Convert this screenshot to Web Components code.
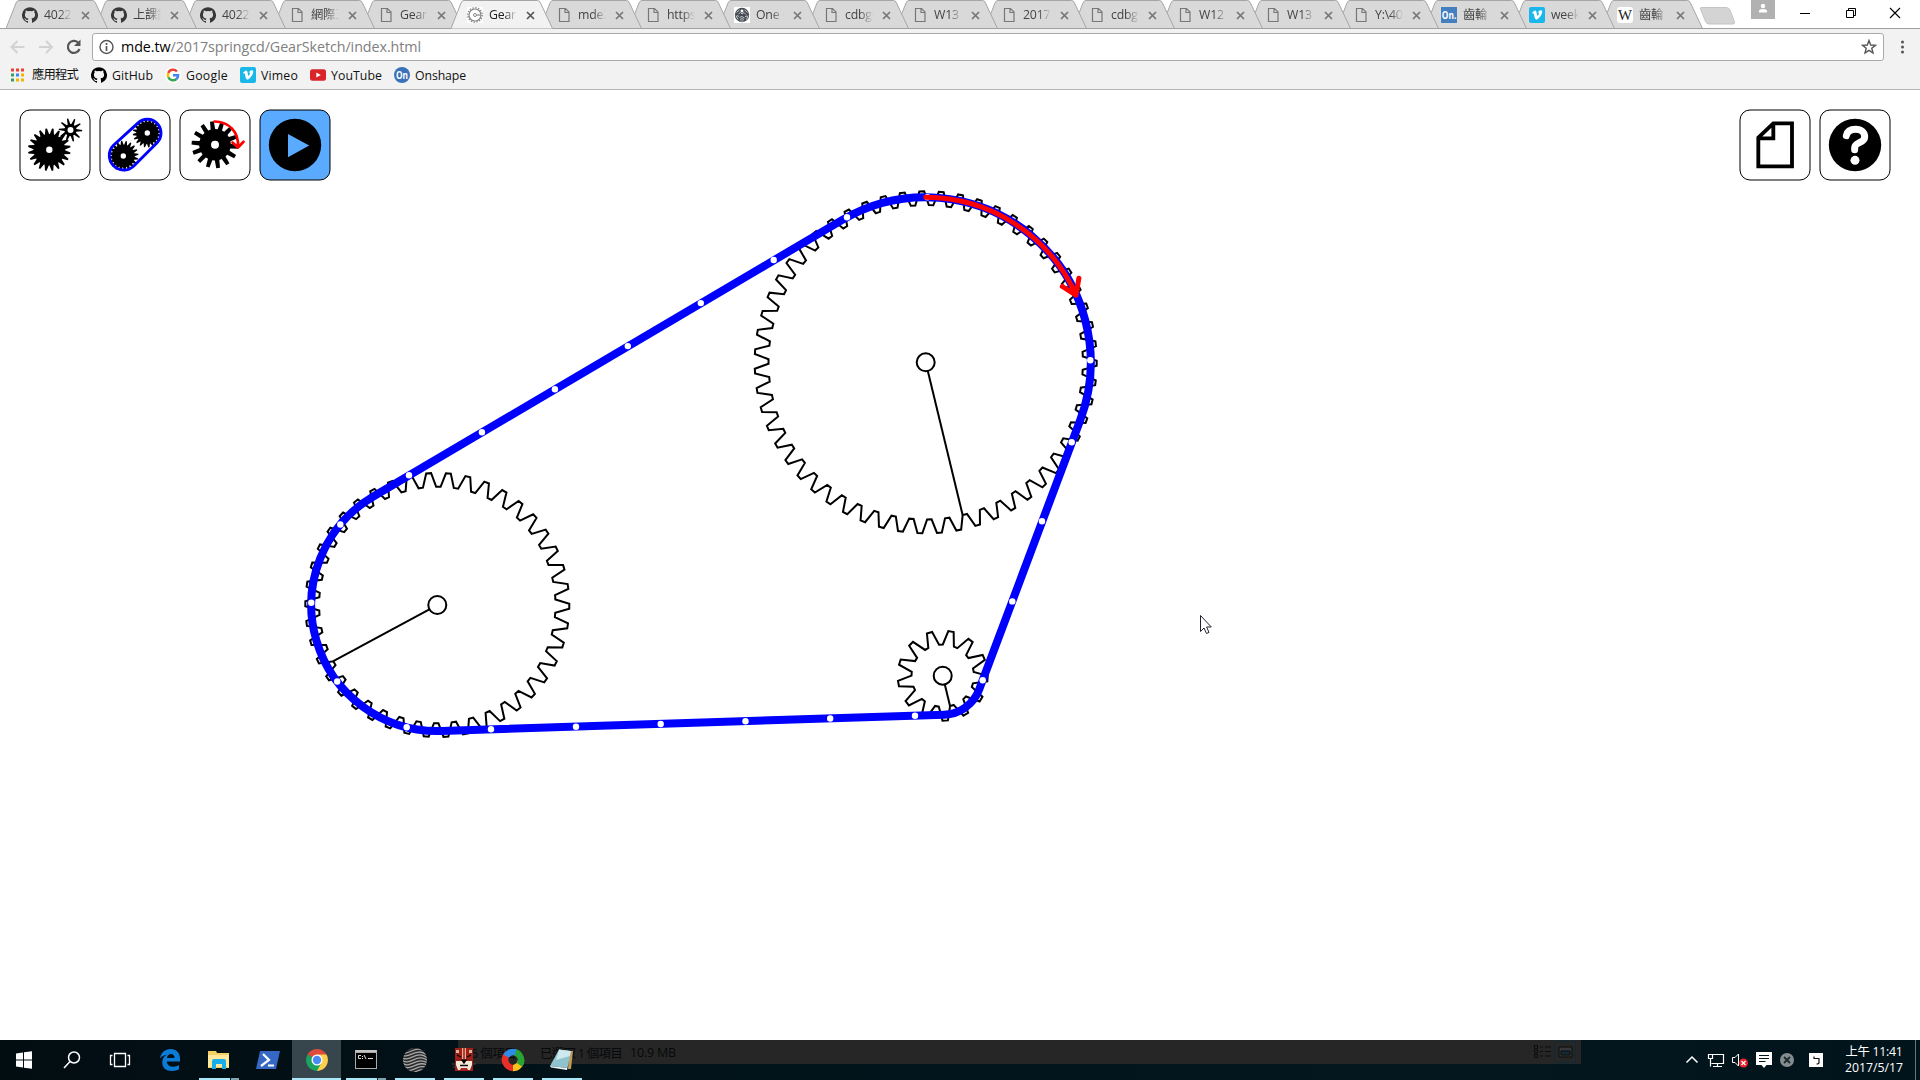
<!DOCTYPE html>
<html lang="zh-Hant">
<head>
<meta charset="utf-8">
<title>GearSketch</title>
<style>
html,body{margin:0;height:100%;overflow:hidden;background:#fff}
body{font-family:"Open Sans","Noto Sans CJK TC",sans-serif}
</style>
</head>
<body>
<desktop-screen></desktop-screen>
<script>
const make = (host, css, html) => {
  const t = document.createElement('template');
  t.innerHTML = `<style>*{box-sizing:border-box}${css}</style>${html}`;
  host.attachShadow({mode:'open'}).appendChild(t.content.cloneNode(true));
};

/* ---------- gear geometry ---------- */
function gearPath(cx, cy, n, outer, inner, deg = 0, top = .25, flank = .25) {
  const P = 2 * Math.PI / n, t0 = deg * Math.PI / 180, pts = [];
  const root = 1 - top - 2 * flank;
  const add = (a, r) => pts.push((cx + r * Math.cos(a)).toFixed(2) + ' ' + (cy + r * Math.sin(a)).toFixed(2));
  for (let i = 0; i < n; i++) {
    const a = t0 + i * P;
    add(a - root * P, inner); add(a, inner);
    add(a + flank * P, outer); add(a + (flank + top) * P, outer);
  }
  return 'M' + pts.join('L') + 'Z';
}
function beltPath(c) {
  let d = '';
  const seg = c.map((a, i) => {
    const b = c[(i + 1) % c.length], dx = b.x - a.x, dy = b.y - a.y;
    const n = Math.atan2(dy, dx) - Math.acos((a.r - b.r) / Math.hypot(dx, dy));
    return [a.x + a.r * Math.cos(n), a.y + a.r * Math.sin(n), b.x + b.r * Math.cos(n), b.y + b.r * Math.sin(n)];
  });
  seg.forEach((s, i) => {
    const nx = seg[(i + 1) % seg.length], r = c[(i + 1) % c.length].r;
    d += (i ? 'L' : 'M') + s[0] + ' ' + s[1] + 'L' + s[2] + ' ' + s[3] + `A${r} ${r} 0 0 1 ${nx[0]} ${nx[1]}`;
  });
  return d + 'Z';
}

/* ---------- icons ---------- */
const OCTO = '<path fill="#000" d="M8 .2A8 8 0 0 0 5.500 15.800c.4.1.5-.2.5-.4v-1.500c-2.200.5-2.700-1-2.700-1-.4-.9-.9-1.200-.9-1.200-.7-.5.1-.5.1-.5.8.1 1.200.8 1.200.8.7 1.300 1.900.9 2.300.7.1-.5.3-.9.5-1.100-1.800-.2-3.600-.9-3.600-4 0-.9.3-1.600.8-2.100-.1-.2-.4-1 .1-2.100 0 0 .7-.2 2.200.8a7.500 7.500 0 0 1 4 0c1.500-1 2.200-.8 2.200-.8.4 1.100.2 1.900.1 2.100.5.6.8 1.300.8 2.100 0 3.100-1.900 3.700-3.700 3.900.3.3.6.8.6 1.500v2.400c0 .2.1.5.5.4A8 8 0 0 0 8 .2z"/>';
const FAV = {
  github: `<g opacity=".75">${OCTO}</g>`,
  githubDark: OCTO,
  page: '<path d="M3.500 1.500h6l3.500 3.500v9.500h-9.500zM9 1.500v4h4" fill="none" stroke="#777" stroke-width="1.200"/>',
  gear: `<rect width="16" height="16" fill="#fff"/><circle cx="8" cy="8" r="6" fill="none" stroke="#888" stroke-width="1.200"/><circle cx="8" cy="8" r="7.200" fill="none" stroke="#888" stroke-width="1.400" stroke-dasharray="1.400 1.428"/><circle cx="8" cy="8" r="1.500" fill="none" stroke="#888"/><path d="M9.500 8h4.500" stroke="#888" stroke-width="1.200"/>`,
  ball: `<rect width="16" height="16" fill="#fff"/><circle cx="8" cy="8" r="7.200" fill="#454b50"/><path d="M2.500 5.500l3-2.500M10.500 3l3 2.500M4 12.500l-2-4M12.500 12.500l1.500-4M6.500 14h3M4.500 7l2-1.500 1.500 1.500 2-1.500 2 2M5.500 10.500l2.500-1 2.500 1.500M3 8.500l2 1M11 9.500l2-.5M6 12.500l2-1 2 1" fill="none" stroke="#cfd6da" stroke-width=".9"/><circle cx="8" cy="4" r="1.400" fill="#fff"/>`,
  on: '<rect width="16" height="16" fill="#4480c0"/><text x=".8" y="12.200" font-family="Open Sans" font-weight="700" font-size="10.500" fill="#fff" textLength="14.500" lengthAdjust="spacingAndGlyphs">On.</text>',
  onRound: '<circle cx="8" cy="8" r="8" fill="#3a72b8"/><text x="2" y="11.700" font-family="Open Sans" font-weight="700" font-size="10" fill="#fff" textLength="12" lengthAdjust="spacingAndGlyphs">On</text>',
  vimeo: '<rect width="16" height="16" rx="2" fill="#1ab7ea"/><path d="M3 5.800 5.400 3.800c1.300-.6 1.900.3 2.200 2 .3 1.500.5 3 .9 3s1.200-1.300 1.500-2c.3-.9-.2-1.100-1-.8.4-1.800 1.500-2.800 2.800-2.700 1.300.1 1.700 1.100 1.200 2.800-.6 2.300-3.200 5.800-5 6.500-1.400.4-2.200-1.200-2.600-3-.3-1.400-.6-3.200-1-3.400L3.600 6.600z" fill="#fff"/>',
  wiki: '<rect width="16" height="16" rx="3" fill="#fff"/><text x="1" y="13" font-family="Liberation Serif" font-size="14" fill="#222" textLength="14" lengthAdjust="spacingAndGlyphs">W</text>',
  google: '<circle cx="8" cy="8" r="8" fill="#fff"/><g fill="none" stroke-width="2.500"><path d="M12 4.500A5.200 5.200 0 0 0 3.300 6" stroke="#ea4335"/><path d="M3.300 6a5.200 5.200 0 0 0 0 4.300" stroke="#fbbc05"/><path d="M3.300 10.200A5.200 5.200 0 0 0 11.500 12" stroke="#34a853"/><path d="M8 8.200h5.100A5 5 0 0 1 11.500 12" stroke="#4285f4"/></g>',
  youtube: '<rect y="2.200" width="16" height="11.600" rx="2.500" fill="#d9252a"/><path d="M6.300 5.400v5.200l4.500-2.600z" fill="#fff"/>',
  apps: [0,1,2].map(r=>[0,1,2].map(c=>`<rect x="${1+c*5}" y="${1.500+r*5}" width="3" height="3" fill="${[['#ea4335','#ea4335','#ea4335'],['#34a05a','#4285f4','#f4b400'],['#34a05a','#f4b400','#f4b400']][r][c]}"/>`).join('')).join('')
};

class FavIcon extends HTMLElement {
  connectedCallback() { make(this, ':host{display:block;flex:none;width:16px;height:16px}svg{display:block}', `<svg width="16" height="16">${FAV[this.getAttribute('name')]}</svg>`); }
}
customElements.define('fav-icon', FavIcon);

/* one line of text whose tracking is adjusted to a given width */
class FitText extends HTMLElement {
  connectedCallback() {
    make(this, ':host{display:block;flex:none;white-space:pre;line-height:normal}span{display:inline-block}', '<span><slot></slot></span>');
    const w = +this.getAttribute('w'); if (!w) return;
    const s = this.shadowRoot.querySelector('span'), n = [...this.textContent].length;
    this.style.width = w + 'px';
    s.style.letterSpacing = (w - s.getBoundingClientRect().width) / n + 'px';
  }
}
customElements.define('fit-text', FitText);

/* ---------- tab strip ---------- */
class BrowserTab extends HTMLElement {
  connectedCallback() {
    const on = this.hasAttribute('active'), bg = on ? '#f2f2f2' : '#d9d9d9';
    make(this, `:host{display:flex;position:relative;flex:none;height:29px;padding:0 0 0 16px;align-items:center}
      svg.bg{position:absolute;left:0;top:0}
      fav-icon,.t,.x{position:relative}
      fav-icon{margin-top:1px}
      .t{margin-left:6px;width:28px;overflow:hidden;white-space:nowrap;font-size:12.300px;line-height:20px;letter-spacing:-.2px;color:${on?'#222':'#444'};-webkit-mask-image:linear-gradient(90deg,#000 55%,transparent)}
      .x{margin-left:9px;margin-top:1px}`,
      `<svg class="bg" width="104" height="29"><path d="M0 28.500 10 3Q11 .5 13 .5H86.500Q88.500 .5 89.500 3L101.500 28.500" fill="${bg}" stroke="#a6a6a6"/>${on?'':'<path d="M0 28.500h102" stroke="#a0a0a0"/>'}</svg>
      <fav-icon name="${this.getAttribute('icon')}"></fav-icon><div class="t"><slot></slot></div>
      <svg class="x" width="9" height="9"><path d="M1 1l7 7M8 1l-7 7" stroke="${on?'#555':'#777'}" stroke-width="1.700"/></svg>`);
  }
}
customElements.define('browser-tab', BrowserTab);

const TABS = [['github','4022'],['github','上課錄'],['github','4022'],['page','網際工'],['page','GearS'],['gear','GearS'],['page','mde2'],['page','https:'],['ball','One C'],['page','cdbg0'],['page','W13'],['page','2017'],['page','cdbg0'],['page','W12'],['page','W13'],['page','Y:\\40'],['on','齒輪'],['vimeo','week'],['wiki','齒輪']];
class TabStrip extends HTMLElement {
  connectedCallback() {
    make(this, `:host{display:flex;height:29px;background:linear-gradient(#fff 28px,#a0a0a0 28px);padding-left:6px;align-items:flex-start}
      .new{margin:7px 0 0 11px;flex:none}.gap{flex:1}.user{width:24px;height:19px;background:#b1b1b1;margin-right:7px}
      .w{width:46px;height:27px;display:block;flex:none}`,
      TABS.map((t,i)=>`<browser-tab icon="${t[0]}" ${i==5?'active':''} style="width:${i<11?89:88}px;z-index:${i==5?50:30-i}">${t[1]}</browser-tab>`).join('') +
      `<svg class="new" width="36" height="18"><path d="M1 .5H26Q29 .5 30 3L34.500 15Q35 17 33 17H9Q6.500 17 5.500 14.500L.5 2Q.3 .5 1 .5z" fill="#d4d4d4" stroke="#c4c4c4"/></svg>
      <div class="gap"></div>
      <svg class="user" viewBox="0 0 24 19"><circle cx="12" cy="6" r="2.200" fill="#fff"/><path d="M8 12.500V11q0-2 4-2t4 2v1.500z" fill="#fff"/></svg>
      <svg class="w"><path d="M18 13.500h10" stroke="#000"/></svg>
      <svg class="w"><path d="M18.500 10.500h7v7h-7zM20.500 10.500v-2h7v7h-2" fill="none" stroke="#000"/></svg>
      <svg class="w"><path d="M16 8l10 10M26 8l-10 10" stroke="#000" stroke-width="1.100"/></svg>`);
  }
}
customElements.define('tab-strip', TabStrip);

/* ---------- toolbar ---------- */
class AddressBar extends HTMLElement {
  connectedCallback() {
    make(this, `:host{display:flex;height:33px;background:#f2f2f2;align-items:flex-start;padding:4px 0 0 0}
      .nav{width:92px;height:28px;flex:none}
      .box{width:1792px;height:28px;border:1px solid #a9a9a9;border-radius:3px;background:#fff;display:flex;align-items:center;padding:0 6px 0 5px}
      .info{width:18px;height:18px;flex:none}fit-text{margin-left:5px;font-size:14.300px;margin-top:-1px;color:#808080}b{font-weight:400;color:#000}
      .star{margin-left:auto}.menu{width:36px;height:28px}`,
      `<svg class="nav" fill="none"><path d="M24.500 14H12M17.500 8l-6 6 6 6M39 14h12.500M46 8l6 6-6 6" stroke="#d2d2d2" stroke-width="2"/><path d="M78 9.500A6 6 0 1 0 79.500 16" stroke="#555" stroke-width="2.200"/><path d="M80.500 6.500v6.500h-6.500z" fill="#555"/></svg>
      <div class="box"><svg class="info"><circle cx="8.500" cy="9" r="6.500" fill="none" stroke="#555" stroke-width="1.400"/><path d="M8.500 8v5M8.500 5v2" stroke="#555" stroke-width="1.700"/></svg>
      <fit-text w="300"><b>mde.tw</b>/2017springcd/GearSketch/index.html</fit-text>
      <svg class="star" width="16" height="16"><path d="M8 1.500l1.700 4.500 4.800.3-3.700 3 1.200 4.700-4-2.600-4 2.600 1.200-4.700-3.700-3 4.800-.3z" fill="none" stroke="#555" stroke-width="1.400"/></svg></div>
      <svg class="menu"><g fill="#555"><circle cx="18.500" cy="9" r="1.500"/><circle cx="18.500" cy="14" r="1.500"/><circle cx="18.500" cy="19" r="1.500"/></g></svg>`);
  }
}
customElements.define('address-bar', AddressBar);

class BookmarkBar extends HTMLElement {
  connectedCallback() {
    const B = [['apps',10,6,46,'應用程式'],['githubDark',13,5,41,'GitHub'],['google',12,5,42,'Google'],['vimeo',12,5,37,'Vimeo'],['youtube',12,5,51,'YouTube'],['onRound',12,5,51,'Onshape']];
    make(this, `:host{display:flex;height:28px;background:#f2f2f2;border-bottom:1px solid #b4b4b4;align-items:center;font-size:12.300px;color:#111}fav-icon{margin-top:-1px}fit-text{height:18px;line-height:18px!important}fit-text:nth-of-type(1){margin-top:-1px}`,
      B.map(b=>`<fav-icon name="${b[0]}" style="margin-left:${b[1]}px"></fav-icon><fit-text w="${b[3]}" style="margin-left:${b[2]}px">${b[4]}</fit-text>`).join(''));
  }
}
customElements.define('bookmark-bar', BookmarkBar);

/* ---------- GearSketch buttons; each icon is drawn in sketch coordinates ---------- */
const ICON = {
  gear: () => `<path fill-rule="evenodd" d="${gearPath(49.300,149.700,20,21.300,15.800,2,.24,.3)}M52.500 149.700a3.200 3.200 0 1 0-6.400 0 3.200 3.200 0 1 0 6.400 0"/><path fill-rule="evenodd" d="${gearPath(70.500,130,10,11.700,6,-10,.18,.28)}M73.500 130a3 3 0 1 0-6 0 3 3 0 1 0 6 0"/>`,
  chain: () => `<path d="${gearPath(123.300,156,20,15.200,11.400,4,.24,.3)}"/><path d="${gearPath(147.300,133,20,14.500,11,4,.24,.3)}"/><circle cx="123.300" cy="156" r="2.700" fill="#fff"/><circle cx="147.300" cy="133" r="2.700" fill="#fff"/><path d="${beltPath([{x:123.300,y:156,r:14.500},{x:147.300,y:133,r:13.700}])}" fill="none" stroke="#00f" stroke-width="2.900"/>`,
  momentum: () => `<path d="${gearPath(215,144.700,14,23.500,15.800,-3,.36,.14)}"/><circle cx="215" cy="144.700" r="4" fill="#fff"/><path d="M214.500 121.500C229 121.500 239 132 238 147M232.500 142.500 238 147.500 243.500 141.800" fill="none" stroke="red" stroke-width="2.700" stroke-linejoin="round" stroke-linecap="round"/>`,
  play: () => `<circle cx="295" cy="145" r="26.200"/><path d="M288 134v23.300L309.200 145.400z" fill="#5aaaff"/>`,
  doc: () => `<path transform="translate(1720 95) scale(.3333)" d="M115 128 160 85H216V214H115zM160 85v45H115" fill="none" stroke="#000" stroke-width="11.500"/>`,
  help: () => `<circle cx="1855" cy="145" r="26.200"/><g transform="translate(1720 95) scale(.3333)"><path d="M379 122C382 108 394 103 407 103C424 103 434 112 434 126C434 145 404 141 404 158V164" fill="none" stroke="#fff" stroke-width="21" stroke-linecap="round"/><circle cx="405" cy="196" r="13.500" fill="#fff"/></g>`
};
class SketchButton extends HTMLElement {
  connectedCallback() {
    const x = +this.getAttribute('x'), k = this.getAttribute('icon');
    make(this, ':host{display:block;width:72px;height:72px;flex:none}svg{display:block}',
      `<svg width="72" height="72" viewBox="${x-1} 109 72 72"><rect x="${x}" y="110" width="70" height="70" rx="10" fill="${k=='play'?'#5aaaff':'#fff'}" stroke="#000"/>${ICON[k]()}</svg>`);
  }
}
customElements.define('sketch-button', SketchButton);

/* ---------- gear canvas ---------- */
class GearCanvas extends HTMLElement {
  connectedCallback() {
    const A={x:925.700,y:362.300,r:165,n:55,t:76.400}, B={x:437.300,y:605,r:126,n:42,t:151.600}, C={x:942.700,y:675.700,r:39,n:13,t:76.400};
    const gear = g => { const a=g.t*Math.PI/180, i=g.r-7.800;
      return `<path d="${gearPath(g.x,g.y,g.n,g.r+6,i,g.t)}"/><circle cx="${g.x}" cy="${g.y}" r="9"/><path d="M${g.x+9*Math.cos(a)} ${g.y+9*Math.sin(a)}L${g.x+i*Math.cos(a)} ${g.y+i*Math.sin(a)}"/>`; };
    const dots = [[773.700,260],[847,217.300],[1090.300,360.300],[1071.700,442.300],[1042,521.300],[1012.300,601.400],[982.700,680.300],[915,715.700],[409,475.300],[340.300,524.500],[311.300,602.700],[337.200,681.500],[406.700,727.300],[491,729.300],[576,726.700],[660.700,724],[745.500,721.200],[830.200,718.500],[481.900,432.200],[554.900,389.200],[627.800,346.100],[700.800,303.100],[927.500,197.300]];
    make(this, ':host{display:block}svg{display:block}',
      `<svg width="1920" height="950" viewBox="0 90 1920 950"><g fill="none" stroke="#000" stroke-width="2">${gear(A)}${gear(B)}${gear(C)}</g>
      <path d="${beltPath([A,C,B])}" fill="none" stroke="#00f" stroke-width="8"/>
      <g fill="#fff">${dots.map(d=>`<circle cx="${d[0]}" cy="${d[1]}" r="3.200"/>`).join('')}</g>
      <path d="M925.700 197.300A165 165 0 0 1 1075.800 294.500M1062.300 286.500 1076 295.200 1078.900 278.200" fill="none" stroke="red" stroke-width="5" stroke-linecap="round" stroke-linejoin="round"/>
      <path d="M1200.500 615.500V631.500L1204 628 1206.500 633.500 1209 632.400 1206.600 627H1211.300z" fill="#fff" stroke="#223" stroke-width="1"/></svg>`);
  }
}
customElements.define('gear-canvas', GearCanvas);

class SketchPage extends HTMLElement {
  connectedCallback() {
    make(this, `:host{display:grid;height:950px;background:#fff;overflow:hidden}gear-canvas,.bar{grid-area:1/1}
      .bar{display:flex;gap:8px;padding:19px 29px 0 19px;align-items:flex-start}i{flex:1}`,
      `<gear-canvas></gear-canvas><div class="bar"><sketch-button icon="gear" x="20"></sketch-button><sketch-button icon="chain" x="100"></sketch-button><sketch-button icon="momentum" x="180"></sketch-button><sketch-button icon="play" x="260"></sketch-button><i></i><sketch-button icon="doc" x="1740"></sketch-button><sketch-button icon="help" x="1820"></sketch-button></div>`);
  }
}
customElements.define('sketch-page', SketchPage);

/* ---------- taskbar ---------- */
const swirl = [-15,-12,-9,-6,-3,0,3,6,9,12].map(o=>`<path d="M-1 ${9+o}C5 ${18+o} 16 ${4+o} 25 ${16+o}"/>`).join('');
const APP = {
  start:'<path fill="#fff" d="M4 5.500 11 4.500V11.500H4zM12 4.300 20 3.200V11.500H12zM4 12.500h7v7L4 18.500zM12 12.500h8v8.300L12 19.700z"/>',
  search:'<circle cx="14" cy="9.500" r="5.500" fill="none" stroke="#fff" stroke-width="1.500"/><path d="M10 13.500 4 20" stroke="#fff" stroke-width="1.500"/>',
  view:'<path d="M5.500 5.500h11v13h-11zM3.500 7.500h-2v9h2M18.500 7.500h2v9h-2" fill="none" stroke="#fff" stroke-width="1.300"/>',
  edge:'<path fill="#0b7bd6" d="M2 10.500C3 4.500 7 1 12.500 1 18.500 1 22 5 22 10.500V13.500H8.800C9 17 12 18.700 15 18.700c2.500 0 4.500-.7 6-1.600V21.300C19 22.500 17 23 14 23 8 23 4.200 19.500 4.200 14.500 4.200 11 6 8.300 9 6.800 6 7 3.500 8.500 2 10.500zM9 10h7.500C16.500 7.500 15 6 13 6S9.300 7.500 9 10z"/>',
  files:'<path fill="#f4cf66" d="M1 3h8l1 2h12v15H1z"/><path fill="#ffe89a" d="M1 7h21v12H1z"/><path fill="#19aeea" d="M5 13q0-2 2-2h10q2 0 2 2v8h-4v-5H9v5H5z"/>',
  ps:'<path fill="#3468c4" d="M4 3h20l-4 18H0z"/><path d="M7 6l6 6-8 6M12 17.500h6" fill="none" stroke="#fff" stroke-width="2.200"/>',
  chrome:'<path fill="#dd4b3e" d="M12 12 2.500 6.500A11 11 0 0 1 21.500 6.500z"/><path fill="#fcd04b" d="M12 12V6.500h9.500A11 11 0 0 1 12 23z"/><path fill="#1ba25e" d="M12 12 16.500 14.500 12 23A11 11 0 0 1 2.500 6.500z"/><circle cx="12" cy="12" r="5.500" fill="#fff"/><circle cx="12" cy="12" r="4.200" fill="#4a8af4"/>',
  cmd:'<rect x="1" y="2" width="22" height="19" fill="#aaa"/><rect x="2" y="5" width="20" height="15" fill="#000"/><path d="M1.500 3h21" stroke="#ddd"/><path d="M7 7.500h-2.500v3H7M8.500 8v1M8.500 10v1M10 7l2 4M14 10.500h5" fill="none" stroke="#ddd"/>',
  ball:`<clipPath id="c"><circle cx="12" cy="12" r="12"/></clipPath><circle cx="12" cy="12" r="12" fill="#2c2c2c"/><g clip-path="url(#c)" stroke="#a8a8a8" stroke-width="1.300" fill="none" transform="rotate(-12 12 12)">${swirl}</g>`,
  lion:'<path fill="#9c1f18" d="M3 0h18v23H3z"/><path fill="#d9b49b" d="M4 2h3v3H4zM17 2h3v3h-3zM10 0h4v12h-4z"/><path fill="#c23a2b" d="M11 0h2v11h-2z"/><path fill="#f5ead8" d="M4 13h6l2 2 2-2h6v4l-2 5h-2l-1-2H9l-1 2H6l-2-5z"/><path d="M5 7l4 2M19 7l-4 2M10 12h4l-2 3z" stroke="#000" stroke-width="1.300"/><path d="M8 17.500h8" stroke="#111" stroke-width="1.500"/><path d="M9 21h6" stroke="#b23" stroke-width="1.500"/><path d="M0 16h3M21 16h3M1 19h2" stroke="#444"/>',
  ring:'<g fill="none" stroke-width="6.500"><path d="M4.300 14A8 8 0 0 1 4.600 8.500L7 5.700" stroke="#e8302a"/><path d="M20 12A8 8 0 0 1 12 20" stroke="#fbc31b"/><path d="M12 20A8 8 0 0 1 4.200 11" stroke="#e8302a"/><path d="M13.500 4.200A8 8 0 0 1 18.500 16.800" stroke="#26a536"/><path d="M5 8.200A8 8 0 0 1 14.500 4.500" stroke="#2f8be8"/></g>',
  note:'<path fill="#c49a55" d="M19 3h4l-2 18h-3z"/><path fill="#8fc3cf" d="M9 1.500 21 3 17.500 20 0 18z"/><path fill="#cfe8ee" d="M9 1.500 21 3 19.800 8 6 12z"/><path fill="#e9f4f6" d="M0 18 17.500 20 17 22 1 19.500z"/>'
};
class TaskItem extends HTMLElement {
  connectedCallback() {
    const u = this.getAttribute('run');
    const line = u=='multi' ? 'linear-gradient(90deg,#a8e8f8 31px,#071a20 31px 32px,#7da6b2 32px)' : '#a8e8f8';
    make(this, `:host{display:flex;position:relative;flex:none;height:40px;width:49px;flex-direction:column;align-items:center;justify-content:space-between;padding-top:8px}
      :host([active]){background:#37464c}div{height:2px;width:${this.hasAttribute('active')?'100%':'40px'};background:${u?line:'none'}}svg{display:block}`,
      `<svg width="24" height="24">${APP[this.getAttribute('icon')]}</svg><div></div>`);
  }
}
customElements.define('task-item', TaskItem);

class TaskBar extends HTMLElement {
  connectedCallback() {
    make(this, `:host{display:flex;position:relative;height:40px;background:linear-gradient(90deg,#020d12,#02131a 35%,#04171e 75%,#02141b);color:#fff}
      .ghost{position:absolute;left:458px;top:0;width:1123px;height:24px;background:#262626;color:#06090b;display:flex;align-items:center;padding-left:13px;font-size:12.500px}
      .ghost fit-text+fit-text{margin-left:24px}.ghost fit-text:nth-of-type(3){margin-left:8px!important}.ghost svg{margin-left:auto}
      .sp{flex:1}.tray{width:420px;height:40px;display:flex;position:relative;align-items:flex-start}
      .tray svg{width:334px;height:40px;flex:none}.clock{width:80px;text-align:center;display:flex;flex-direction:column;align-items:center;font-size:12.300px;height:40px;padding-top:2px}
      .clock fit-text{height:17px}.end{border-left:1px solid #68767b;height:40px;width:5px;margin-left:1px}`,
      `<div class="ghost"><fit-text w="45">6 個項目</fit-text><fit-text w="82">已選取 1 個項目</fit-text><fit-text w="46">10.9 MB</fit-text>
       <svg width="54" height="24" fill="none" stroke="#0a0c0d"><path d="M7.500 5.500h3v3h-3zM7.500 10h3v3h-3zM7.500 14.500h3v3h-3zM13 7h3M18 7h6M13 11.500h3M18 11.500h6M13 16h3M18 16h6"/><rect x="27.500" y="1.500" width="21" height="21" stroke="#0b2a3a"/><path d="M32 7h13v10h-13z" fill="#33383a"/><path d="M34 11h9v4h-9z" fill="#162a33"/></svg></div>
      <task-item icon="start" style="width:48px"></task-item><task-item icon="search" style="width:48px"></task-item><task-item icon="view" style="width:49px"></task-item>
      <task-item icon="edge"></task-item><task-item icon="files" run="multi"></task-item><task-item icon="ps"></task-item><task-item icon="chrome" run="one" active></task-item><task-item icon="cmd" run="multi"></task-item><task-item icon="ball" run="one"></task-item><task-item icon="lion" run="one"></task-item><task-item icon="ring" run="one"></task-item><task-item icon="note" run="one"></task-item>
      <div class="sp"></div>
      <div class="tray"><svg fill="none" stroke="#fff"><path d="M186.500 22.500 192 17l5.500 5.500" stroke-width="1.500"/>
       <path d="M212.500 14.500h11v9h-12M208.500 14.500h4v4h-4zM210.500 18.500v8M217.500 24v2.500M213 26.500h9" stroke-width="1.200"/>
       <path d="M232.500 17.500h2.500l3.500-3.500v12l-3.500-3.500h-2.500z"/><circle cx="243.500" cy="23" r="4.500" fill="#e8212b" stroke="none"/><path d="M241.500 21l4 4M245.500 21l-4 4" stroke-width="1.300"/>
       <path d="M256 12h16v13h-5.500l-2.500 3-2.500-3h-5.500z" fill="#fff" stroke="none"/><path d="M259 15.500h10M259 18.500h10M259 21.500h6.500" stroke="#05171e"/>
       <circle cx="287" cy="20" r="7" fill="#858c8f" stroke="none"/><path d="M284 17l6 6M290 17l-6 6" stroke="#1a2a30" stroke-width="1.800"/>
       <path d="M309 13h14v14h-14z" fill="#fff" stroke="none"/><path d="M314 16.500v2h5v4q0 1.500-2.500 1.500" stroke="#111" stroke-width="1.200"/></svg>
       <div class="clock"><fit-text w="57">上午 11:41</fit-text><fit-text w="58">2017/5/17</fit-text></div><div class="end"></div></div>`);
  }
}
customElements.define('task-bar', TaskBar);

class DesktopScreen extends HTMLElement {
  connectedCallback() {
    make(this, ':host{display:flex;flex-direction:column;width:1920px;height:1080px;overflow:hidden}tab-strip,address-bar,bookmark-bar,sketch-page,task-bar{flex:none}',
      '<tab-strip></tab-strip><address-bar></address-bar><bookmark-bar></bookmark-bar><sketch-page></sketch-page><task-bar></task-bar>');
  }
}
customElements.define('desktop-screen', DesktopScreen);
</script>
</body>
</html>
